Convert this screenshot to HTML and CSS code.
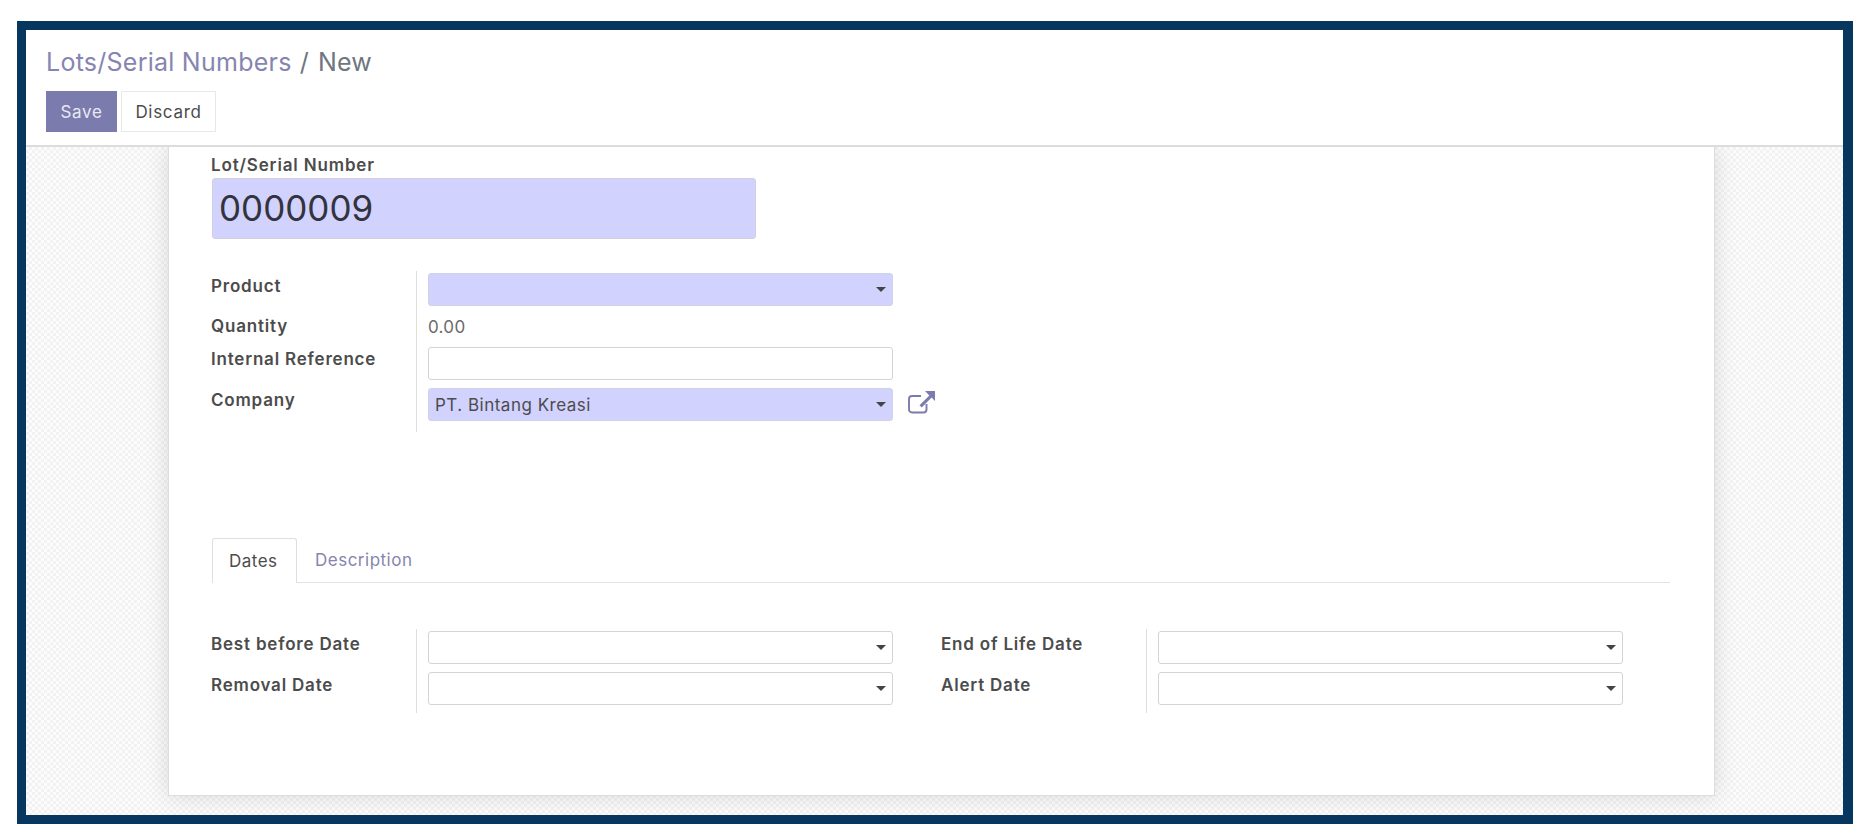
FILE: index.html

```html
<!DOCTYPE html>
<html lang="en">
<head>
    <meta charset="UTF-8">
    <title>Lots/Serial Numbers</title>
    <link rel="stylesheet" href="styles.css">
</head>
<body>
<div class="frame">
    <header class="control">
        <div class="crumbs"><a href="#">Lots/Serial Numbers</a><span class="sep">/</span><span class="now">New</span></div>
        <div class="buttons">
            <button class="btn save">Save</button>
            <button class="btn discard">Discard</button>
        </div>
    </header>
    <main class="content">
        <div class="sheet">
            <div class="title-label">Lot/Serial Number</div>
            <div class="title-input">0000009</div>

            <div class="group main-group">
                <div class="row">
                    <label>Product</label>
                    <div class="val"><div class="field req"><i class="caret"></i></div></div>
                </div>
                <div class="row qty">
                    <label>Quantity</label>
                    <div class="val"><span class="num">0.00</span></div>
                </div>
                <div class="row">
                    <label>Internal Reference</label>
                    <div class="val"><div class="field"></div></div>
                </div>
                <div class="row last">
                    <label>Company</label>
                    <div class="val">
                        <div class="field req">PT. Bintang Kreasi<i class="caret"></i></div>
                        <svg class="ext" width="27" height="23" viewBox="0 0 27 23">
                            <path d="M18.5 13v5.5a3 3 0 0 1-3 3H4a3 3 0 0 1-3-3V8a3 3 0 0 1 3-3h9" fill="none" stroke="#7c7bad" stroke-width="1.9"/>
                            <path d="M17 0H27v10l-3.4-3.4-9.9 9.9-2.2-2.2 9.9-9.9z" fill="#7c7bad"/>
                        </svg>
                    </div>
                </div>
            </div>

            <ul class="tabs">
                <li class="active"><a href="#">Dates</a></li>
                <li><a href="#">Description</a></li>
            </ul>

            <div class="columns">
                <div class="group">
                    <div class="row">
                        <label>Best before Date</label>
                        <div class="val"><div class="field"><i class="caret"></i></div></div>
                    </div>
                    <div class="row">
                        <label>Removal Date</label>
                        <div class="val"><div class="field"><i class="caret"></i></div></div>
                    </div>
                </div>
                <div class="group">
                    <div class="row">
                        <label>End of Life Date</label>
                        <div class="val"><div class="field"><i class="caret"></i></div></div>
                    </div>
                    <div class="row">
                        <label>Alert Date</label>
                        <div class="val"><div class="field"><i class="caret"></i></div></div>
                    </div>
                </div>
            </div>
        </div>
    </main>
</div>
</body>
</html>
```

FILE: styles.css

```css
@charset "UTF-8";
/* reset */
body,ul,li{margin:0;padding:0}
ul{list-style:none}
a{text-decoration:none}
html,body{height:100%}
body{background:#fff;font:17px/20px Inter,"Noto Sans",sans-serif;letter-spacing:.5px;color:#4c4c4c;overflow:hidden}

.frame{
    box-sizing:border-box;
    width:1836px;
    height:803px;
    margin:21px 0 0 17px;
    border:9px solid #07365f;
    border-right-width:10px;
    display:flex;
    flex-direction:column;
}

/* top bar */
.control{
    box-sizing:border-box;
    height:117px;
    padding:16px 0 0 20px;
    border-bottom:2px solid #dcdcdc;
    background:#fff;
}
.crumbs{
    font-size:25px;
    line-height:32px;
    letter-spacing:.25px;
}
.crumbs a{color:#8685b0}
.crumbs .sep{margin:0 9px 0 8px;color:#6f7680}
.crumbs .now{color:#6f7680}
.buttons{display:flex;gap:4px;margin-top:13px}
.btn{
    height:41px;
    border:1px solid #e8e8e8;
    font:17px Inter,"Noto Sans",sans-serif;
    letter-spacing:.7px;
    padding:0;
}
.save{width:71px;background:#7c7bad;border-color:#7c7bad;color:#e8e8f2}
.discard{width:95px;background:#fff;color:#4c4c4c}

/* background */
.content{
    flex:1;
    overflow:hidden;
    background:conic-gradient(#f2f2f2 25%,#fcfcfc 0 50%,#f2f2f2 0 75%,#fcfcfc 0) 0 0/6px 6px;
}
.sheet{
    box-sizing:border-box;
    width:1547px;
    height:649px;
    margin-left:142px;
    padding:8px 44px 0 42px;
    background:#fff;
    border:1px solid #dcdce4;
    border-top:0;
    box-shadow:0 0 22px rgba(0,0,0,.13);
}

.title-label{font-weight:600;letter-spacing:.85px}
.title-input{
    box-sizing:border-box;
    width:544px;
    height:61px;
    margin:3px 0 0 1px;
    padding-left:6px;
    font-size:35px;
    letter-spacing:0;
    line-height:59px;
    color:#33333d;
    background:#d2d2ff;
    border:1px solid #d0d0e0;
    border-radius:3px;
}

/* label + value groups */
.main-group{margin-top:32px}
.row{display:flex;height:41px}
.row.qty{height:33px}
.row.last{height:46px}
.row label{
    width:205px;
    flex:none;
    line-height:28px;
    font-weight:600;
    letter-spacing:.8px;
}
.main-group .row:first-child label,.columns .row label{line-height:30px}
.val{
    display:flex;
    align-items:flex-start;
    width:476px;
    flex:none;
    box-sizing:border-box;
    padding:2px 0 0 11px;
    border-left:1px solid #dedede;
}
.num{line-height:28px;margin-top:-1px;letter-spacing:.3px;color:#6b6b6b}
.field{
    box-sizing:border-box;
    display:flex;
    align-items:center;
    width:465px;
    height:33px;
    flex:none;
    padding:0 6px;
    background:#fff;
    border:1px solid #d4d4d4;
    border-radius:3px;
}
.field.req{background:#d2d2ff;border-color:#d2d2e6}
.caret{
    margin-left:auto;
    border:5px solid transparent;
    border-top-color:#444;
    border-bottom:0;
}
.ext{margin:3px 0 0 15px;flex:none}

/* notebook */
.tabs{
    display:flex;
    height:45px;
    box-sizing:border-box;
    margin:106px 0 0 1px;
    border-bottom:1px solid #e3e3e3;
}
.tabs li{padding:0 18px;line-height:44px;height:45px;box-sizing:border-box}
.tabs a{color:#8685b0}
.tabs .active{
    width:85px;
    padding:0 16px;
    background:#fff;
    border:1px solid #dedede;
    border-bottom:0;
    border-radius:3px 3px 0 0;
}
.tabs .active a{color:#4c4c4c}
.columns{display:flex;gap:49px;margin-top:46px}
.columns .row:last-child{height:43px}
```
